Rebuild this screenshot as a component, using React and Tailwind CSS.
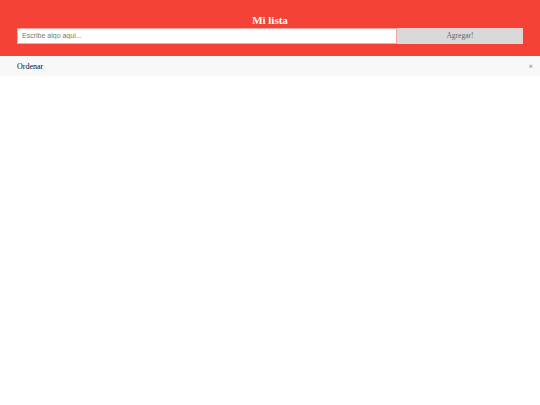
export default function App() {
  return (
    <div className="min-h-[405px] bg-white" style={{ fontFamily: '"Liberation Serif", serif' }}>
      <div className="bg-[#f44336] px-[17px] pt-[13px] pb-[12px]">
        <h2 className="text-center text-white font-bold text-[11px] leading-[15px] h-[15px]">Mi lista</h2>
        <div className="flex h-[16px]">
          <input
            type="text"
            placeholder="Escribe algo aqui..."
            className="flex-1 min-w-0 bg-white border border-[#f8a8a0] px-[4px] text-[7px] text-[#333] placeholder:text-[#777] outline-none"
            style={{ fontFamily: '"Liberation Sans", Arial, sans-serif' }}
          />
          <span className="w-[126px] flex items-center justify-center bg-[#d9d9d9] border border-[#e8d0cc] text-[#666] text-[7.5px]">
            Agregar!
          </span>
        </div>
      </div>
      <div className="flex items-center justify-between h-[20px] bg-[#f8f8f8] pl-[17px] pr-[7px] pt-[1px]">
        <span className="text-[8px] text-[#111]">Ordenar</span>
        <span className="text-[8px] text-[#555]">×</span>
      </div>
    </div>
  );
}
